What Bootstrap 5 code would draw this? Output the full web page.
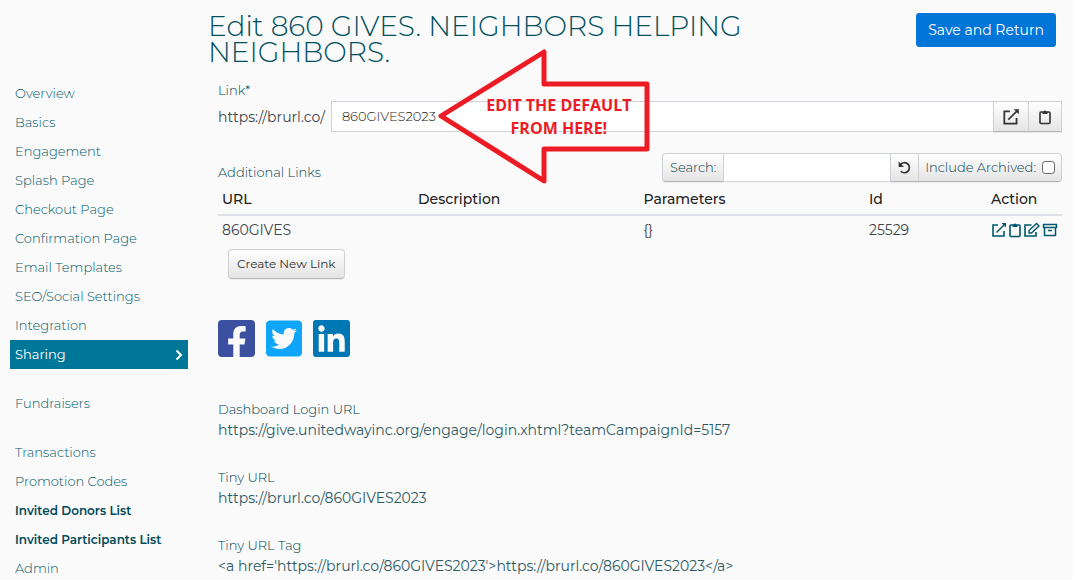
<!DOCTYPE html>
<html lang="en">
<head>
<meta charset="utf-8">
<meta name="viewport" content="width=device-width, initial-scale=1">
<title>Edit 860 GIVES. NEIGHBORS HELPING NEIGHBORS.</title>
<link href="https://cdn.jsdelivr.net/npm/bootstrap@5.3.0/dist/css/bootstrap.min.css" rel="stylesheet">
<style>
body { background: #fafafa; color: #3f4548; font-family: Montserrat, Inter, sans-serif; font-size: 14px; line-height: 20px; font-weight: 400; }
.side-menu { flex: 0 0 178px; margin: 79px 0 0 10px; font-size: 13px; font-weight: 300; }
.side-menu .nav-link { color: #00596b; padding: 0 5px; line-height: 29px; }
.side-menu .nav-link.current { background: #007799; color: #fff; font-weight: 400; }
.side-menu .strong-link { color: #004a59; font-weight: 600; font-size: 12px; }
.menu-gap { margin-top: 20px; }
.page-main { padding: 13px 11px 16px 20px; min-width: 0; }
.page-title { color: #00505f; font-size: 28px; line-height: 26px; font-weight: 300; max-width: 640px; }
.btn-save { --bs-btn-bg: #0275d8; --bs-btn-border-color: #0275d8; --bs-btn-color: #fff; --bs-btn-hover-bg: #025aa5; --bs-btn-hover-color: #fff; font-size: 14px; line-height: 20px; padding: 6px 11px; border-radius: 3px; margin-right: 6px; }
.page-body { padding-left: 10px; }
.caption-text { font-size: 13px; color: #00414f; line-height: 20px; font-weight: 300; }
.link-caption { margin-top: 15px; margin-bottom: 1px; }
.url-text { color: #2c5964; margin-top: 1px; }
.btn-soft, .soft-cell { background: linear-gradient(#fff, #e4e4e4); border: 1px solid #cfd2d4; border-bottom-color: #b4b6b8; color: #00414f; font-size: 13px; font-weight: 300; padding: 0 7px; box-shadow: 0 1px 1px #0000000f; border-radius: 4px; }
.btn-soft { color: #333; }
.btn-soft.tight { padding: 0 6px; }
.archive-cell { padding: 0 6px; gap: 6px; }
.create-btn { font-size: 12px; font-weight: 400; height: 30px; margin: 4px 0 0 10px; padding: 0 8px; }
.form-control { border-color: #ced4da; border-radius: 0; font-size: 13px; font-weight: 300; color: #222; padding: 0 10px; min-height: 0; }
.link-row { height: 31px; gap: 6px; }
.filter-row { margin-top: 21px; }
.filter-group { width: 400px; height: 29px; }
.form-check-input { width: 13px; height: 13px; border: 1px solid #666; border-radius: 3px; }
.links-table { table-layout: fixed; --bs-table-bg: transparent; color: #3f4548; }
.links-table th, .links-table td { padding: 4px 4px 5px; line-height: 20px; border: 0; }
.links-table th { font-weight: 500; color: #222; padding-top: 7px; }
.links-table thead tr { border-bottom: 2px solid #dee2e6; }
.w-url { width: 196px; } .w-id { width: 122px; } .w-act { width: 75px; }
.icon { fill: none; stroke: currentColor; stroke-width: 1.6; display: block; }
.act-link { color: #00596b; }
.act-row { height: 20px; align-items: center; }
.socials { margin-top: 41px; gap: 11px; }
.url-block { margin-top: 27px; }
.socials + .url-block { margin-top: 42px; }
.callout { left: 107px; top: -53px; width: 214px; height: 138px; z-index: 6; pointer-events: none; }
.callout-label { left: 48px; top: 46px; width: 148px; color: #ed1c24; font: 700 16px/23px "Open Sans", sans-serif; }
</style>
</head>
<body>
<svg class="d-none" aria-hidden="true">
  <symbol id="i-open" viewBox="0 0 16 16"><path d="M7 3H2v11h11V9"/><path d="m5.500 10.500 8-8" stroke-width="1.500"/><path d="M10.500 1H15v4.500z" fill="currentColor" stroke="none"/></symbol>
  <symbol id="i-clip" viewBox="0 0 12 16"><rect x="1" y="3" width="10" height="11.500" rx="1"/><path d="M3.500 3h1a1.500 1.500 0 0 1 3 0h1v2h-5z" fill="currentColor" stroke="none"/></symbol>
</svg>
<div class="d-flex">
  <nav class="side-menu nav flex-column flex-nowrap" aria-label="Campaign">
    <a class="nav-link" href="#">Overview</a>
    <a class="nav-link" href="#">Basics</a>
    <a class="nav-link" href="#">Engagement</a>
    <a class="nav-link" href="#">Splash Page</a>
    <a class="nav-link" href="#">Checkout Page</a>
    <a class="nav-link" href="#">Confirmation Page</a>
    <a class="nav-link" href="#">Email Templates</a>
    <a class="nav-link" href="#">SEO/Social Settings</a>
    <a class="nav-link" href="#">Integration</a>
    <a class="nav-link current d-flex justify-content-between align-items-center" href="#" aria-current="page">Sharing
      <svg width="8" height="12" viewBox="0 0 8 12" class="icon" aria-hidden="true"><path d="M1.500 1.500 6 6 1.500 10.500" stroke-width="2"/></svg></a>
    <a class="nav-link menu-gap" href="#">Fundraisers</a>
    <a class="nav-link menu-gap" href="#">Transactions</a>
    <a class="nav-link" href="#">Promotion Codes</a>
    <a class="nav-link strong-link" href="#">Invited Donors List</a>
    <a class="nav-link strong-link" href="#">Invited Participants List</a>
    <a class="nav-link" href="#">Admin</a>
  </nav>
  <main class="page-main flex-grow-1">
    <header class="d-flex justify-content-between align-items-start">
      <h1 class="page-title mb-0">Edit 860 GIVES. NEIGHBORS HELPING NEIGHBORS.</h1>
      <button type="button" class="btn btn-save text-nowrap">Save and Return</button>
    </header>
    <div class="page-body">
      <label for="slug" class="caption-text link-caption d-block">Link*</label>
      <div class="d-flex align-items-center link-row">
        <span>https://brurl.co/</span>
        <div class="input-group flex-nowrap h-100 position-relative">
          <input id="slug" type="text" class="form-control" value="860GIVES2023">
          <button type="button" class="btn btn-soft" aria-label="Open link"><svg width="20" height="18" viewBox="0 0 18 16" class="icon"><use href="#i-open" x="1" width="16" height="16"/></svg></button>
          <button type="button" class="btn btn-soft" aria-label="Copy link"><svg width="18" height="16" viewBox="0 0 18 16" class="icon"><use href="#i-clip" x="3" width="12" height="16"/></svg></button>
          <div class="callout position-absolute">
            <svg width="214" height="138" viewBox="0 0 214 138" fill="none" stroke="#ed1c24" stroke-width="5" aria-hidden="true"><path d="M4 68 107 4v32h103v65H107v32z" stroke-linejoin="round"/></svg>
            <div class="callout-label position-absolute text-center text-nowrap">EDIT THE DEFAULT<br>FROM HERE!</div>
          </div>
        </div>
      </div>
      <div class="d-flex justify-content-between align-items-end filter-row">
        <span class="caption-text">Additional Links</span>
        <div class="input-group flex-nowrap filter-group">
          <label for="search" class="input-group-text soft-cell">Search:</label>
          <input id="search" type="text" class="form-control">
          <button type="button" class="btn btn-soft tight" aria-label="Reset"><svg width="15" height="15" viewBox="0 0 14 14" class="icon"><path d="M3 4.500a4.700 4.700 0 1 1 .5 6"/><path d="M1.500 1.500v5h5z" fill="currentColor" stroke="none"/></svg></button>
          <span class="input-group-text soft-cell archive-cell"><label for="archived">Include Archived:</label><input id="archived" type="checkbox" class="form-check-input m-0"></span>
        </div>
      </div>
      <table class="table links-table mb-0">
        <colgroup><col class="w-url"><col><col><col class="w-id"><col class="w-act"></colgroup>
        <thead><tr><th>URL</th><th>Description</th><th>Parameters</th><th>Id</th><th>Action</th></tr></thead>
        <tbody><tr><td>860GIVES</td><td></td><td>{}</td><td>25529</td>
          <td><div class="d-flex act-row">
            <a href="#" class="act-link" aria-label="Open"><svg width="16" height="16" class="icon"><use href="#i-open"/></svg></a>
            <a href="#" class="act-link" aria-label="Copy"><svg width="16" height="16" viewBox="0 0 16 16" class="icon"><use href="#i-clip" x="2" width="12" height="16"/></svg></a>
            <a href="#" class="act-link" aria-label="Edit"><svg width="18" height="16" viewBox="0 0 18 16" class="icon"><path d="M8.500 3H2v11h11V10"/><path d="M6 11V8.500l7.500-7 2.500 2.500L8.500 11z" stroke-width="1.400"/></svg></a>
            <a href="#" class="act-link" aria-label="Archive"><svg width="18" height="16" viewBox="0 0 18 16" class="icon" stroke-linejoin="round"><path d="M2.500 2.500h13v3h-13zM3.500 5.500v8h11v-8M7 8.500h4" stroke-width="1.500"/></svg></a>
          </div></td></tr></tbody>
      </table>
      <button type="button" class="btn btn-soft create-btn">Create New Link</button>
      <div class="d-flex socials">
        <a href="#" aria-label="Facebook"><svg width="37" height="37" viewBox="0 32 448 448" fill="#3b50a0" class="d-block"><path d="M400 32H48A48 48 0 0 0 0 80v352a48 48 0 0 0 48 48h137.250V327.690h-63V256h63v-54.640c0-62.150 37-96.480 93.670-96.480 27.140 0 55.520 4.840 55.520 4.840v61h-31.270c-30.810 0-40.420 19.120-40.420 38.730V256h68.780l-11 71.690h-57.780V480H400a48 48 0 0 0 48-48V80a48 48 0 0 0-48-48z"/></svg></a>
        <a href="#" aria-label="Twitter"><svg width="36" height="37" viewBox="0 32 448 448" fill="#0fa5fa" class="d-block"><path d="M400 32H48C21.500 32 0 53.500 0 80v352c0 26.500 21.500 48 48 48h352c26.500 0 48-21.500 48-48V80c0-26.500-21.500-48-48-48zm-48.900 158.800c.2 2.800.2 5.700.2 8.500 0 86.700-66 186.600-186.600 186.600-37.200 0-71.700-10.800-100.700-29.400 5.300.6 10.400.8 15.800.8 30.700 0 58.900-10.400 81.400-28-28.800-.6-53-19.500-61.300-45.500 10.100 1.500 19.200 1.500 29.600-1.200-30-6.100-52.500-32.500-52.500-64.400v-.8c8.700 4.900 18.900 7.900 29.600 8.300a65.447 65.447 0 0 1-29.200-54.600c0-12.200 3.200-23.400 8.900-33.100 32.300 39.800 80.800 65.800 135.200 68.600-9.300-44.500 24-80.600 64-80.600 18.900 0 35.900 7.900 47.900 20.700 14.800-2.800 29-8.300 41.600-15.800-4.900 15.200-15.200 28-28.800 36.100 13.200-1.400 26-5.100 37.800-10.200-8.900 13.100-20.100 24.700-32.900 34z"/></svg></a>
        <a href="#" aria-label="LinkedIn"><svg width="37" height="37" viewBox="0 32 448 448" fill="#0077b5" class="d-block"><path d="M416 32H31.900C14.300 32 0 46.500 0 64.300v383.400C0 465.500 14.300 480 31.900 480H416c17.600 0 32-14.500 32-32.300V64.300c0-17.800-14.400-32.300-32-32.300zM135.400 416H69V202.200h66.500V416zm-33.200-243c-21.300 0-38.500-17.300-38.500-38.500S80.900 96 102.200 96c21.200 0 38.500 17.300 38.500 38.500 0 21.300-17.200 38.500-38.500 38.500zm282.100 243h-66.400V312c0-24.800-.5-56.700-34.500-56.700-34.600 0-39.900 27-39.900 54.900V416h-66.400V202.200h63.700v29.200h.9c8.900-16.800 30.600-34.500 62.900-34.500 67.200 0 79.700 44.300 79.700 101.900V416z"/></svg></a>
      </div>
      <section class="url-block"><div class="caption-text">Dashboard Login URL</div><div class="url-text">https://give.unitedwayinc.org/engage/login.xhtml?teamCampaignId=5157</div></section>
      <section class="url-block"><div class="caption-text">Tiny URL</div><div class="url-text">https://brurl.co/860GIVES2023</div></section>
      <section class="url-block"><div class="caption-text">Tiny URL Tag</div><div class="url-text">&lt;a href='https://brurl.co/860GIVES2023'&gt;https://brurl.co/860GIVES2023&lt;/a&gt;</div></section>
    </div>
  </main>
</div>
<script src="https://cdn.jsdelivr.net/npm/bootstrap@5.3.0/dist/js/bootstrap.bundle.min.js"></script>
</body>
</html>
